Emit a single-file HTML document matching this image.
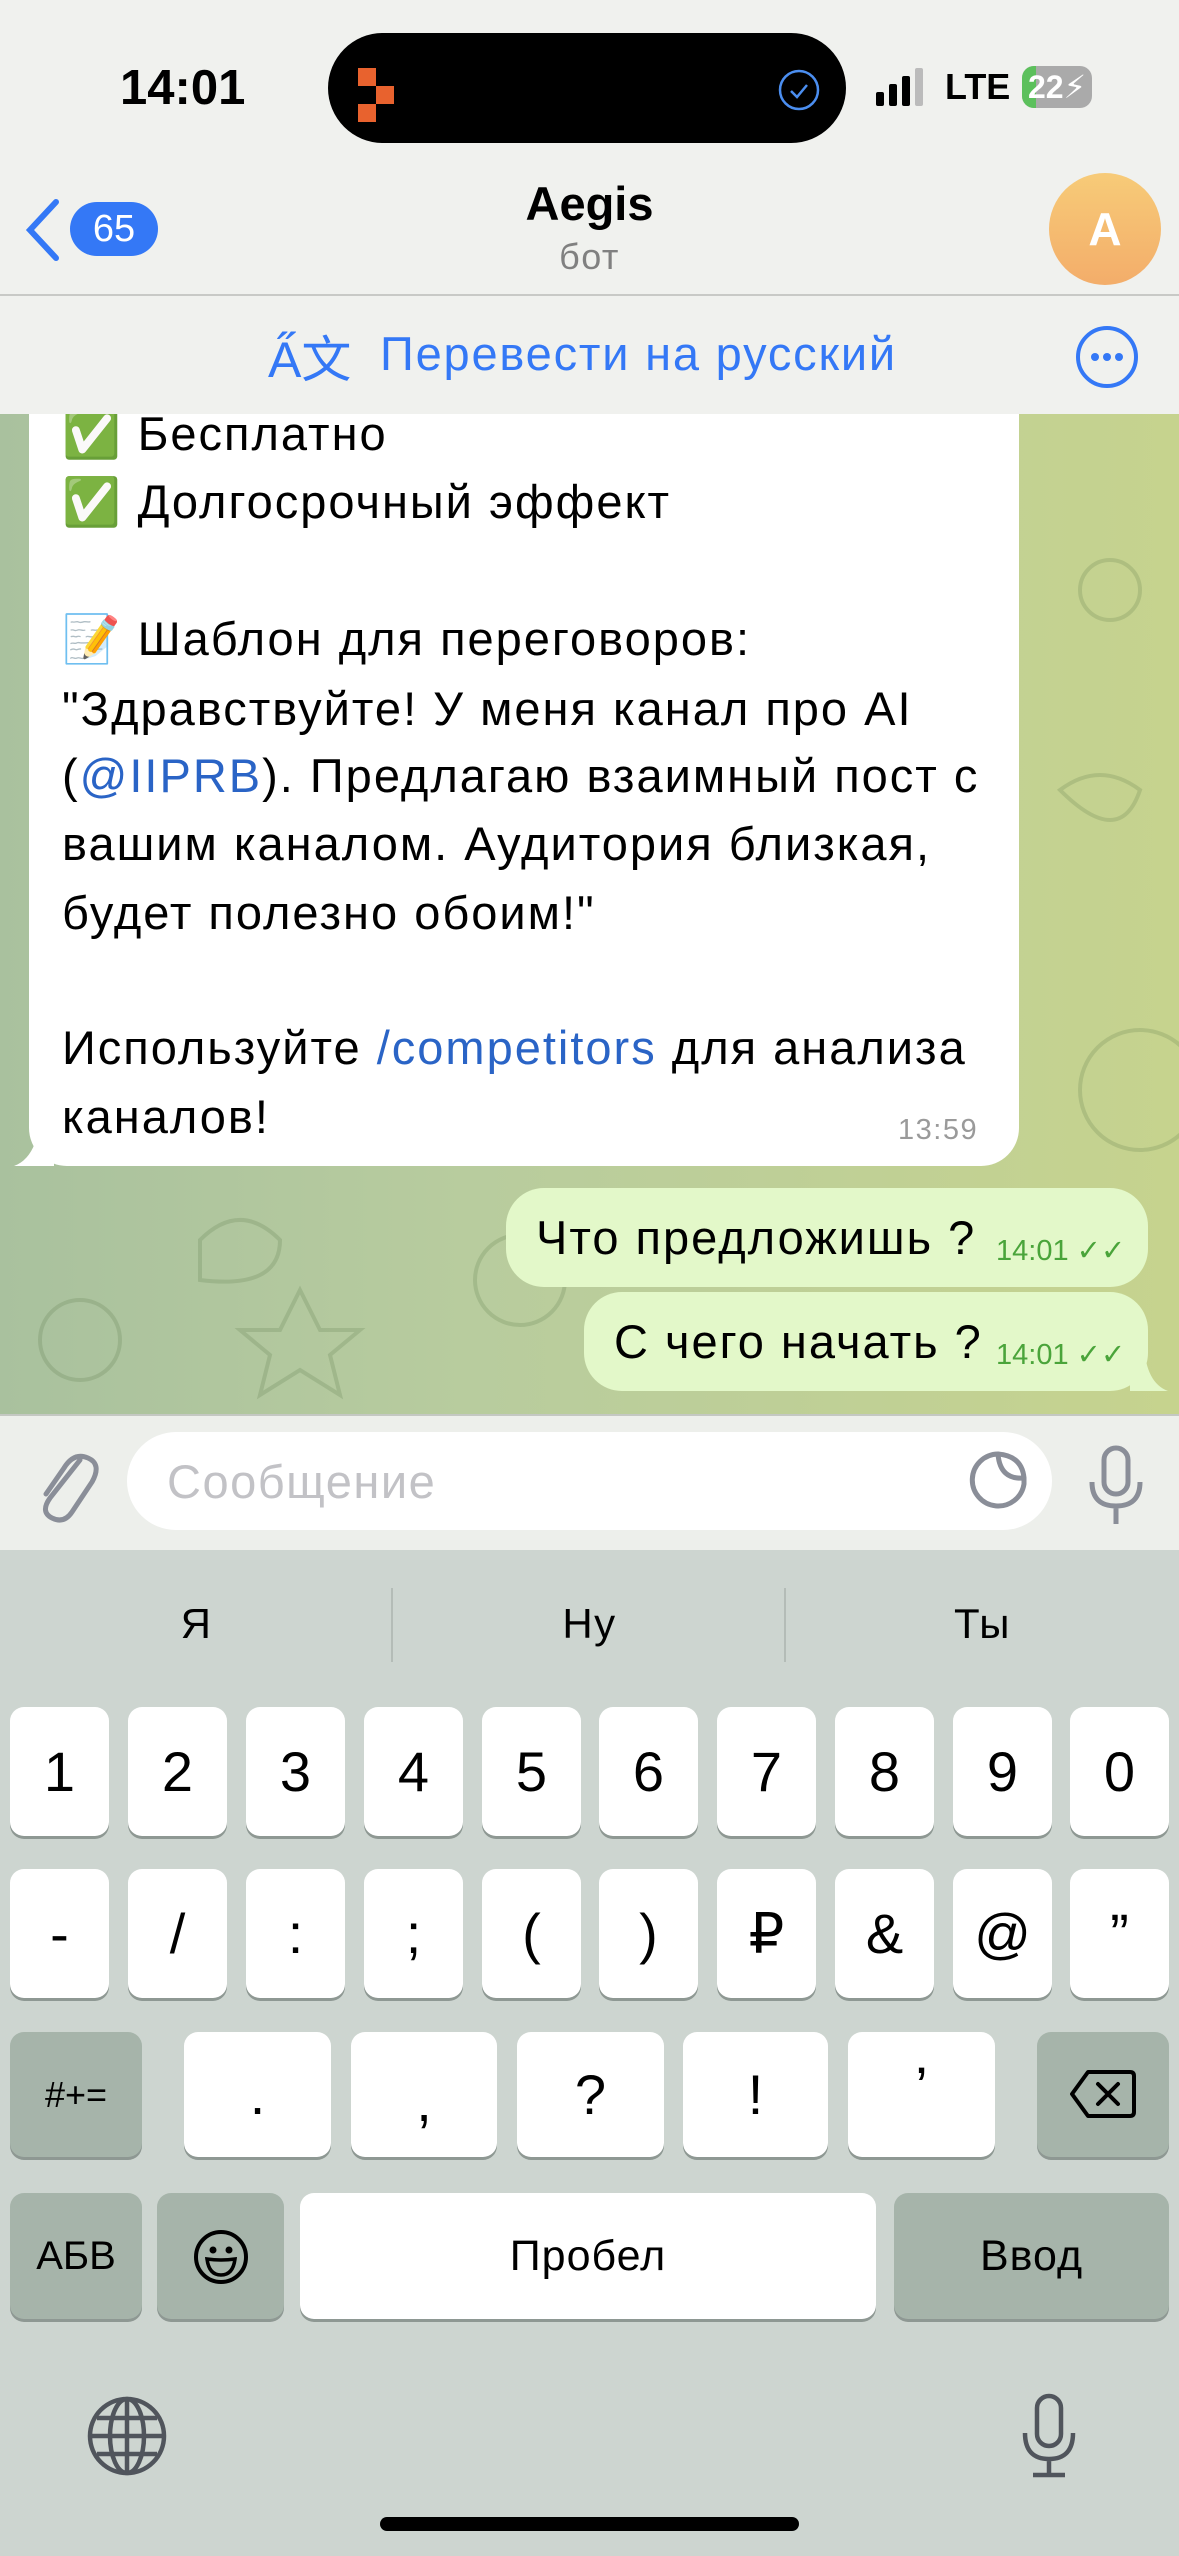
<!DOCTYPE html>
<html><head><meta charset="utf-8"><style>
*{margin:0;padding:0;box-sizing:border-box}
body{width:1179px;height:2556px;overflow:hidden;position:relative;font-family:"Liberation Sans","DejaVu Sans",sans-serif;background:#cdd5d0;letter-spacing:1.5px}
.a{position:absolute}
#chat{left:0;top:290px;width:1179px;height:1124px;background:linear-gradient(90deg,#a9c19e 0%,#b8cc9e 40%,#c6d38e 100%)}
#top{left:0;top:0;width:1179px;height:414px;background:#f0f1ee}
.bubble{background:#fff;border-radius:38px}
.ln{position:absolute;left:62px;font-size:47px;color:#000;white-space:nowrap;line-height:68px;letter-spacing:2px}
.lnk{color:#2a64c6}
.out{background:#e3f8c9;border-radius:38px;position:absolute;height:99px}
.out span{position:absolute;font-size:47px;top:22px;white-space:nowrap;letter-spacing:2px}
.out i{position:absolute;font-style:normal;font-size:29px;color:#4aa43a;top:45px;letter-spacing:0}
.key{position:absolute;background:#fff;border-radius:14px;box-shadow:0 3px 0 #8e9893;font-size:56px;text-align:center;color:#000;letter-spacing:0}
.dk{background:#a6b4aa}
</style></head><body>
<div id="chat" class="a">
<svg class="a" style="left:0;top:0" width="1179" height="1124" opacity="0.18" fill="none" stroke="#4a6a3a" stroke-width="4">
<circle cx="1110" cy="300" r="30"/><path d="M1060 500 q40 -30 80 0 q-20 60 -80 0z"/><circle cx="80" cy="1050" r="40"/><path d="M300 1000 l20 40 l40 0 l-30 25 l10 40 l-40 -25 l-40 25 l10 -40 l-30 -25 l40 0z"/><path d="M870 1050 q60 -80 150 -20"/><circle cx="1140" cy="800" r="60"/><path d="M200 950 q40 -40 80 0 q0 50 -80 40z"/><circle cx="520" cy="990" r="45"/>
</svg>
</div>
<div class="a bubble" style="left:29px;top:300px;width:990px;height:866px"></div>
<svg class="a" style="left:14px;top:1120px" width="40" height="48"><path d="M40 0 L40 46 L0 46 Q22 38 26 0Z" fill="#fff"/></svg>
<div class="ln" style="top:400px">✅&nbsp;Бесплатно</div>
<div class="ln" style="top:468px">✅&nbsp;Долгосрочный эффект</div>
<div class="ln" style="top:605px">📝&nbsp;Шаблон для переговоров:</div>
<div class="ln" style="top:675px">"Здравствуйте! У меня канал про AI</div>
<div class="ln" style="top:742px">(<span class="lnk">@IIPRB</span>). Предлагаю взаимный пост с</div>
<div class="ln" style="top:810px">вашим каналом. Аудитория близкая,</div>
<div class="ln" style="top:879px">будет полезно обоим!"</div>
<div class="ln" style="top:1014px">Используйте <span class="lnk">/competitors</span> для анализа</div>
<div class="ln" style="top:1083px">каналов!</div>
<div class="a" style="left:898px;top:1114px;font-size:29px;color:#9a9a9a">13:59</div>

<div class="out" style="left:506px;top:1188px;width:642px"><span style="left:30px">Что предложишь ?</span><i style="left:490px">14:01 <span style="position:static;font-size:29px;letter-spacing:0">✓✓</span></i></div>
<div class="out" style="left:584px;top:1292px;width:564px"><span style="left:30px">С чего начать ?</span><i style="left:412px">14:01 <span style="position:static;font-size:29px;letter-spacing:0">✓✓</span></i></div>
<svg class="a" style="left:1130px;top:1345px" width="40" height="46"><path d="M0 0 L0 46 L38 46 Q16 38 14 0Z" fill="#e3f8c9"/></svg>

<div id="top" class="a"></div>
<div class="a" style="left:0;top:294px;width:1179px;height:2px;background:#c8c9c6"></div>
<div class="a" style="left:120px;top:60px;font-size:49px;font-weight:bold;letter-spacing:0">14:01</div>
<div class="a" style="left:328px;top:33px;width:518px;height:110px;background:#000;border-radius:55px"></div>
<div class="a" style="left:358px;top:68px;width:18px;height:18px;background:#e8622e"></div>
<div class="a" style="left:376px;top:86px;width:18px;height:18px;background:#e8622e"></div>
<div class="a" style="left:358px;top:104px;width:18px;height:18px;background:#e8622e"></div>
<svg class="a" style="left:777px;top:68px" width="44" height="44"><circle cx="22" cy="22" r="19" fill="none" stroke="#4b8ef0" stroke-width="2.5"/><path d="M14 23 l6 6 l10 -12" fill="none" stroke="#4b8ef0" stroke-width="2.5"/></svg>
<div class="a" style="left:876px;top:92px;width:8px;height:14px;background:#000;border-radius:2px"></div>
<div class="a" style="left:889px;top:84px;width:8px;height:22px;background:#000;border-radius:2px"></div>
<div class="a" style="left:902px;top:76px;width:8px;height:30px;background:#000;border-radius:2px"></div>
<div class="a" style="left:915px;top:68px;width:8px;height:38px;background:#bbb;border-radius:2px"></div>
<div class="a" style="left:945px;top:66px;font-size:36px;font-weight:bold;letter-spacing:0">LTE</div>
<div class="a" style="left:1022px;top:66px;width:70px;height:42px;background:#aaa;border-radius:12px;overflow:hidden"><div style="width:14px;height:42px;background:#5cc05c"></div></div>
<div class="a" style="left:1028px;top:68px;font-size:32px;font-weight:bold;color:#fff;letter-spacing:0">22⚡</div>

<svg class="a" style="left:22px;top:198px" width="40" height="64"><path d="M34 4 L8 32 L34 60" fill="none" stroke="#3478f6" stroke-width="6" stroke-linecap="round"/></svg>
<div class="a" style="left:70px;top:202px;width:88px;height:54px;background:#3478f6;border-radius:27px;color:#fff;font-size:38px;text-align:center;line-height:54px;letter-spacing:0">65</div>
<div class="a" style="left:0;width:1179px;top:176px;text-align:center;font-size:47px;font-weight:bold;letter-spacing:0">Aegis</div>
<div class="a" style="left:0;width:1179px;top:236px;text-align:center;font-size:36px;color:#808080">бот</div>
<div class="a" style="left:1049px;top:173px;width:112px;height:112px;border-radius:56px;background:linear-gradient(#f7cb78,#f3ad6a);color:#fff;font-size:46px;font-weight:bold;text-align:center;line-height:112px;letter-spacing:0">A</div>

<div class="a" style="left:268px;top:320px;font-size:50px;color:#3478f6;letter-spacing:0">A̋文</div>
<div class="a" style="left:380px;top:326px;font-size:47px;color:#3478f6;letter-spacing:1.8px">Перевести на русский</div>
<svg class="a" style="left:1074px;top:324px" width="66" height="66"><circle cx="33" cy="33" r="29" fill="none" stroke="#3478f6" stroke-width="4"/><circle cx="21" cy="33" r="4" fill="#3478f6"/><circle cx="33" cy="33" r="4" fill="#3478f6"/><circle cx="45" cy="33" r="4" fill="#3478f6"/></svg>

<div class="a" style="left:0;top:1414px;width:1179px;height:136px;background:#edefeb;border-top:2px solid #c4c8c2"></div>
<svg class="a" style="left:30px;top:1440px" width="70" height="84"><path d="M50 20 L20 58 Q10 72 22 78 Q34 84 42 72 L62 42 Q72 24 58 18 Q44 12 34 28 L16 54" fill="none" stroke="#8a8e98" stroke-width="5" stroke-linecap="round"/></svg>
<div class="a" style="left:127px;top:1432px;width:925px;height:98px;background:#fff;border-radius:49px"></div>
<div class="a" style="left:167px;top:1454px;font-size:47px;color:#c2c2c6">Сообщение</div>
<svg class="a" style="left:966px;top:1448px" width="64" height="66"><path d="M32 6 A26 26 0 1 0 58 36 L58 30 Q34 32 32 6Z" fill="none" stroke="#8a8e98" stroke-width="5" stroke-linejoin="round"/><path d="M32 6 Q56 8 58 30" fill="none" stroke="#8a8e98" stroke-width="5"/></svg>
<svg class="a" style="left:1084px;top:1444px" width="64" height="84"><rect x="20" y="4" width="24" height="46" rx="12" fill="none" stroke="#8a8e98" stroke-width="5"/><path d="M8 38 Q8 62 32 62 Q56 62 56 38 M32 62 L32 80" fill="none" stroke="#8a8e98" stroke-width="5"/></svg>

<div class="a" style="left:0;top:1550px;width:1179px;height:1006px;background:#cdd5d0"></div>
<div class="a" style="left:0;width:393px;top:1600px;text-align:center;font-size:42px">Я</div>
<div class="a" style="left:393px;width:393px;top:1600px;text-align:center;font-size:42px">Ну</div>
<div class="a" style="left:786px;width:393px;top:1600px;text-align:center;font-size:42px">Ты</div>
<div class="a" style="left:391px;top:1588px;width:2px;height:74px;background:#b4bcb7"></div>
<div class="a" style="left:784px;top:1588px;width:2px;height:74px;background:#b4bcb7"></div>

<div class="key" style="left:10px;top:1707px;width:99px;height:129px;line-height:129px">1</div>
<div class="key" style="left:128px;top:1707px;width:99px;height:129px;line-height:129px">2</div>
<div class="key" style="left:246px;top:1707px;width:99px;height:129px;line-height:129px">3</div>
<div class="key" style="left:364px;top:1707px;width:99px;height:129px;line-height:129px">4</div>
<div class="key" style="left:482px;top:1707px;width:99px;height:129px;line-height:129px">5</div>
<div class="key" style="left:599px;top:1707px;width:99px;height:129px;line-height:129px">6</div>
<div class="key" style="left:717px;top:1707px;width:99px;height:129px;line-height:129px">7</div>
<div class="key" style="left:835px;top:1707px;width:99px;height:129px;line-height:129px">8</div>
<div class="key" style="left:953px;top:1707px;width:99px;height:129px;line-height:129px">9</div>
<div class="key" style="left:1070px;top:1707px;width:99px;height:129px;line-height:129px">0</div>

<div class="key" style="left:10px;top:1869px;width:99px;height:129px;line-height:129px">-</div>
<div class="key" style="left:128px;top:1869px;width:99px;height:129px;line-height:129px">/</div>
<div class="key" style="left:246px;top:1869px;width:99px;height:129px;line-height:129px">:</div>
<div class="key" style="left:364px;top:1869px;width:99px;height:129px;line-height:129px">;</div>
<div class="key" style="left:482px;top:1869px;width:99px;height:129px;line-height:129px">(</div>
<div class="key" style="left:599px;top:1869px;width:99px;height:129px;line-height:129px">)</div>
<div class="key" style="left:717px;top:1869px;width:99px;height:129px;line-height:129px">₽</div>
<div class="key" style="left:835px;top:1869px;width:99px;height:129px;line-height:129px">&amp;</div>
<div class="key" style="left:953px;top:1869px;width:99px;height:129px;line-height:129px">@</div>
<div class="key" style="left:1070px;top:1869px;width:99px;height:129px;line-height:129px">”</div>

<div class="key dk" style="left:10px;top:2032px;width:132px;height:125px;line-height:125px;font-size:36px">#+=</div>
<div class="key" style="left:184px;top:2032px;width:147px;height:125px;line-height:125px">.</div>
<div class="key" style="left:351px;top:2032px;width:146px;height:125px;line-height:140px">,</div>
<div class="key" style="left:517px;top:2032px;width:147px;height:125px;line-height:125px">?</div>
<div class="key" style="left:683px;top:2032px;width:145px;height:125px;line-height:125px">!</div>
<div class="key" style="left:848px;top:2032px;width:147px;height:125px;line-height:110px">’</div>
<div class="key dk" style="left:1037px;top:2032px;width:132px;height:125px"><svg style="margin-top:36px" width="66" height="52"><path d="M18 4 L60 4 Q64 4 64 8 L64 44 Q64 48 60 48 L18 48 L2 26Z" fill="none" stroke="#000" stroke-width="4" stroke-linejoin="round"/><path d="M28 16 L48 36 M48 16 L28 36" stroke="#000" stroke-width="4" stroke-linecap="round"/></svg></div>

<div class="key dk" style="left:10px;top:2193px;width:132px;height:126px;line-height:126px;font-size:40px">АБВ</div>
<div class="key dk" style="left:157px;top:2193px;width:127px;height:126px"><svg style="margin-top:36px" width="56" height="56"><circle cx="28" cy="28" r="25" fill="none" stroke="#000" stroke-width="4"/><circle cx="20" cy="21" r="3.5"/><circle cx="36" cy="21" r="3.5"/><path d="M14 30 Q28 32 42 30 Q40 46 28 46 Q16 46 14 30Z" fill="none" stroke="#000" stroke-width="3.5"/></svg></div>
<div class="key" style="left:300px;top:2193px;width:576px;height:126px;line-height:126px;font-size:43px;letter-spacing:1px">Пробел</div>
<div class="key dk" style="left:894px;top:2193px;width:275px;height:126px;line-height:126px;font-size:43px;letter-spacing:1px">Ввод</div>

<svg class="a" style="left:87px;top:2396px" width="80" height="80"><g fill="none" stroke="#50555c" stroke-width="4.5"><circle cx="40" cy="40" r="37"/><ellipse cx="40" cy="40" rx="17" ry="37"/><path d="M40 3 L40 77 M3 40 L77 40 M10 22 L70 22 M10 58 L70 58"/></g></svg>
<svg class="a" style="left:1019px;top:2393px" width="60" height="86"><g fill="none" stroke="#50555c" stroke-width="4.5"><rect x="18" y="3" width="24" height="50" rx="12"/><path d="M6 40 Q6 66 30 66 Q54 66 54 40 M30 66 L30 82 M14 82 L46 82"/></g></svg>
<div class="a" style="left:380px;top:2517px;width:419px;height:14px;background:#000;border-radius:7px"></div>
</body></html>
